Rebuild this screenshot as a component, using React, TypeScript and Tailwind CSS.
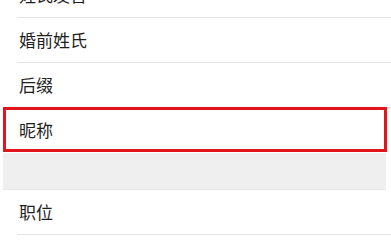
import React from "react"

const font = { fontFamily: '"Noto Sans CJK SC", "Noto Sans", sans-serif' }

function Row({ label, highlight = false, line = true }: { label: string; highlight?: boolean; line?: boolean }) {
  return (
    <div className="relative h-[45px] bg-white">
      <div className="flex h-[44px] items-center pl-[19px] text-[17px] text-[#1e1e1e]">{label}</div>
      {line && <div className="ml-[17px] h-px bg-[#e3e3e3]" />}
      {highlight && (
        <div className="absolute left-[3px] top-[-1px] h-[45px] w-[384px] border-[3px] border-[#e2141c]" />
      )}
    </div>
  )
}

export default function App() {
  return (
    <div className="h-[242px] w-[391px] overflow-hidden bg-white" style={font}>
      <div className="-mt-[27px]">
        <Row label="姓氏发音" />
        <Row label="婚前姓氏" />
        <Row label="后缀" />
        <Row label="昵称" highlight line={false} />
        <div className="ml-[3px] mr-[5px] h-[37px] border-b border-[#e6e6e6] bg-[#efefef]" />
        <Row label="职位" />
      </div>
    </div>
  )
}
